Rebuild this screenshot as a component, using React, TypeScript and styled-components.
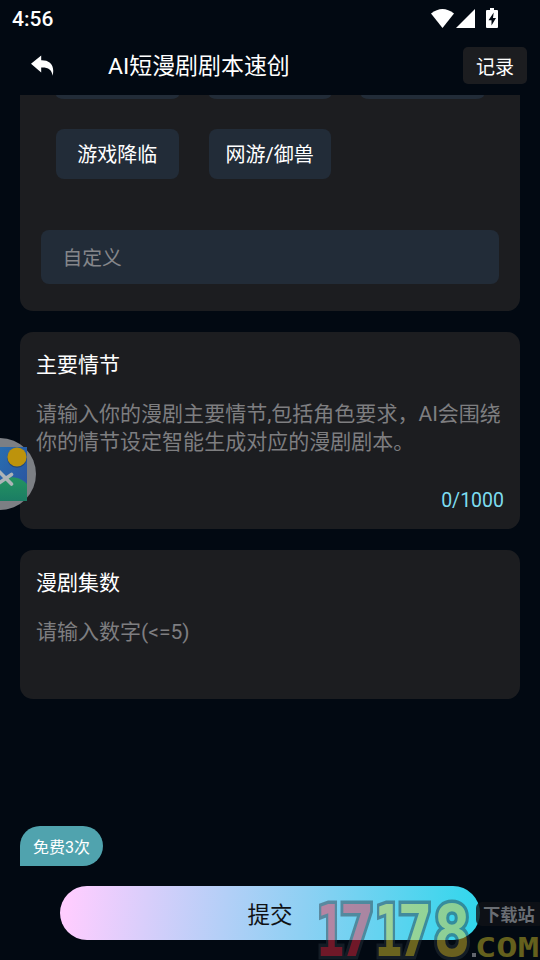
import React from 'react';
import styled, { createGlobalStyle } from 'styled-components';

const GlobalStyle = createGlobalStyle`
  * { box-sizing: border-box; }
  body {
    margin: 0;
    background: #020912;
    color: #fff;
    font-family: Roboto, "Noto Sans CJK SC", sans-serif;
  }
`;

const Screen = styled.main`
  position: relative;
  display: flex;
  flex-direction: column;
  width: 540px;
  height: 960px;
  overflow: hidden;
  background: #020912;
`;

const StatusBar = styled.div`
  display: flex;
  align-items: center;
  justify-content: space-between;
  height: 36px;
  padding: 0 41px 0 12px;
  flex: none;
`;

const Clock = styled.span`
  padding-top: 2px;
  font-size: 21px;
  font-weight: 500;
  line-height: 24px;
`;

const Header = styled.header`
  display: flex;
  align-items: center;
  height: 59px;
  padding: 0 13px 0 30px;
  flex: none;
`;

const Title = styled.h1`
  flex: 1;
  margin: 2px 0 0 53px;
  font-size: 22.95px;
  font-weight: 400;
  line-height: 30px;
`;

const RecordButton = styled.button`
  width: 64px;
  height: 37px;
  padding: 0 0 1px;
  border: 0;
  border-radius: 5px;
  background: #1c1d20;
  color: #fff;
  font: inherit;
  font-size: 19px;
`;

const Content = styled.div`
  display: flex;
  flex-direction: column;
  gap: 21px;
  height: 731px;
  padding: 0 20px;
  overflow: hidden;
  flex: none;
`;

const Card = styled.section<{ $height: number; $joined?: boolean }>`
  display: flex;
  flex-direction: column;
  flex: none;
  height: ${(p) => p.$height}px;
  padding: ${(p) => (p.$joined ? '0 21px' : '18px 16px')};
  border-radius: ${(p) => (p.$joined ? '0 0 13px 13px' : '13px')};
  background: #1c1d20;
`;

const ChipGrid = styled.div`
  display: grid;
  grid-template-columns: repeat(3, 122.5px);
  grid-template-rows: 4px 50px;
  gap: 30px;
  padding-left: 15px;
`;

const Chip = styled.div<{ $cut?: boolean }>`
  display: flex;
  align-items: center;
  justify-content: center;
  padding-bottom: ${(p) => (p.$cut ? 0 : 1)}px;
  border-radius: ${(p) => (p.$cut ? '0 0 8px 8px / 0 0 4px 4px' : '8px')};
  background: #222c38;
  font-size: 20px;
  white-space: nowrap;
`;

const CustomField = styled.div`
  display: flex;
  align-items: center;
  height: 54px;
  margin-top: 51px;
  padding: 0 0 2px 21.5px;
  border-radius: 8px;
  background: #222c38;
  color: #85868a;
  font-size: 19.8px;
`;

const CardTitle = styled.h2`
  margin: 1px 0 0;
  font-size: 21px;
  font-weight: 400;
  line-height: 28px;
`;

const Placeholder = styled.p`
  margin: 21px 0 0;
  color: #7e7e80;
  font-size: 21.03px;
  line-height: 28px;
  white-space: nowrap;
`;

const Counter = styled.span`
  margin-top: auto;
  align-self: flex-end;
  color: #7ddcf0;
  font-size: 19.5px;
  line-height: 21px;
`;

const Footer = styled.footer`
  display: flex;
  flex-direction: column;
  align-items: flex-start;
  gap: 20px;
  padding: 0 20px;
`;

const FreeBadge = styled.div`
  display: flex;
  align-items: center;
  justify-content: center;
  width: 83px;
  height: 40px;
  padding-bottom: 1px;
  border-radius: 20px 20px 20px 0;
  background: #50a3ae;
  font-size: 16px;
`;

const Submit = styled.button`
  width: 420px;
  height: 54px;
  margin-left: 40px;
  padding: 0 0 1px;
  border: 0;
  border-radius: 27px;
  background: linear-gradient(97deg, #ffcdff 2%, #8dd0f3 58%, #2ed7ec 100%);
  color: #101216;
  font: inherit;
  font-size: 22.5px;
`;

const FloatingBall = styled.svg`
  position: absolute;
  left: 0;
  top: 437px;
`;

const Watermark = styled.svg`
  position: absolute;
  right: 0;
  bottom: 0;
  pointer-events: none;
`;

const StatusIcons = () => (
  <svg width="68" height="22" viewBox="431 6 68 22" fill="#fff">
    <path d="M431 12.5 Q442.5 3.5 454 12.5 L442.5 27Z" />
    <path d="M456 27 L475 8 V27Z" />
    <path d="M487 9 h3 V7 h4 v2 h3 q1 0 1 1 v16 q0 1-1 1 h-10 q-1 0-1-1 v-16 q0-1 1-1Z" />
    <path d="M493.7 11.5 L488.5 19.2 h3 v5.3 l4.5-7.5 h-3Z" fill="#020912" />
  </svg>
);

const BackIcon = () => (
  <svg width="25" height="22" viewBox="0 0 25 22" fill="#fff">
    <path d="M1 8.7 L11.2 0.5 V5.3 C19 5 25.3 9.5 22.6 20.8 C21.8 14.5 18 12.3 11.2 12.6 V17.4Z" />
  </svg>
);

const Ball = () => (
  <FloatingBall width="37" height="74" viewBox="0 0 37 74">
    <defs>
      <linearGradient id="sky" x1="0" y1="0" x2="1" y2="1">
        <stop offset="0" stopColor="#286db0" />
        <stop offset="1" stopColor="#2b529e" />
      </linearGradient>
      <linearGradient id="hill" x1="0" y1="0" x2="0" y2="1">
        <stop offset="0" stopColor="#249461" />
        <stop offset="1" stopColor="#1b7d64" />
      </linearGradient>
    </defs>
    <circle cx="0" cy="37" r="36" fill="#7c7f84" />
    <rect x="0" y="10" width="27" height="54" fill="url(#sky)" />
    <path d="M0 45 Q8 39 15 40.5 Q22 41.5 27 47 V64 H0Z" fill="url(#hill)" />
    <circle cx="17" cy="21" r="9.8" fill="#234879" />
    <circle cx="17" cy="20" r="9.6" fill="#bd930c" />
    <path d="M-1 34.5 L11.5 47 M-1 46 L11.5 37.5" stroke="#adb4b7" strokeWidth="3.6" strokeLinecap="round" />
  </FloatingBall>
);

type Digit = { char: string; x: number; width: number; color: string };

const digits: Digit[] = [
  { char: '1', x: 316.5, width: 28, color: '#f42b44' },
  { char: '7', x: 339.5, width: 35, color: '#f42b44' },
  { char: '1', x: 374.5, width: 28, color: '#e9d32f' },
  { char: '7', x: 397.5, width: 35, color: '#e9d32f' },
  { char: '8', x: 433, width: 38, color: '#e9c92f' },
];

const SiteMark = () => (
  <Watermark width="226" height="62" viewBox="314 898 226 62">
    <rect x="476" y="902" width="68" height="24" rx="6" fill="#101318" opacity=".8" />
    <g opacity=".45" fontFamily="DejaVu Sans Mono" fontWeight="700">
      <g fontSize="72" stroke="#29343c" strokeWidth="7" strokeLinejoin="miter" paintOrder="stroke">
        {digits.map((d) => (
          <text key={d.x} x={d.x} y="956" textLength={d.width} lengthAdjust="spacingAndGlyphs" fill={d.color}>{d.char}</text>
        ))}
      </g>
      <rect x="472" y="953" width="4" height="4" fill="#d5d5dd" />
      <text x="475" y="957" fontSize="27" textLength="64" lengthAdjust="spacingAndGlyphs" fill="#dbc92c">COM</text>
    </g>
    <text x="483" y="920.5" fontFamily="Noto Sans CJK SC" fontWeight="700" fontSize="17.3" fill="#696d73">下载站</text>
  </Watermark>
);

export default function App() {
  return (
    <>
      <GlobalStyle />
      <Screen>
        <StatusBar>
          <Clock>4:56</Clock>
          <StatusIcons />
        </StatusBar>
        <Header>
          <BackIcon />
          <Title>AI短漫剧剧本速创</Title>
          <RecordButton>记录</RecordButton>
        </Header>
        <Content>
          <Card $height={216} $joined>
            <ChipGrid>
              <Chip $cut />
              <Chip $cut />
              <Chip $cut />
              <Chip>游戏降临</Chip>
              <Chip>网游/御兽</Chip>
            </ChipGrid>
            <CustomField>自定义</CustomField>
          </Card>
          <Card $height={197}>
            <CardTitle>主要情节</CardTitle>
            <Placeholder>
              请输入你的漫剧主要情节,包括角色要求，AI会围绕
              <br />
              你的情节设定智能生成对应的漫剧剧本。
            </Placeholder>
            <Counter>0/1000</Counter>
          </Card>
          <Card $height={149}>
            <CardTitle>漫剧集数</CardTitle>
            <Placeholder>请输入数字(&lt;=5)</Placeholder>
          </Card>
        </Content>
        <Footer>
          <FreeBadge>免费3次</FreeBadge>
          <Submit>提交</Submit>
        </Footer>
        <Ball />
        <SiteMark />
      </Screen>
    </>
  );
}
